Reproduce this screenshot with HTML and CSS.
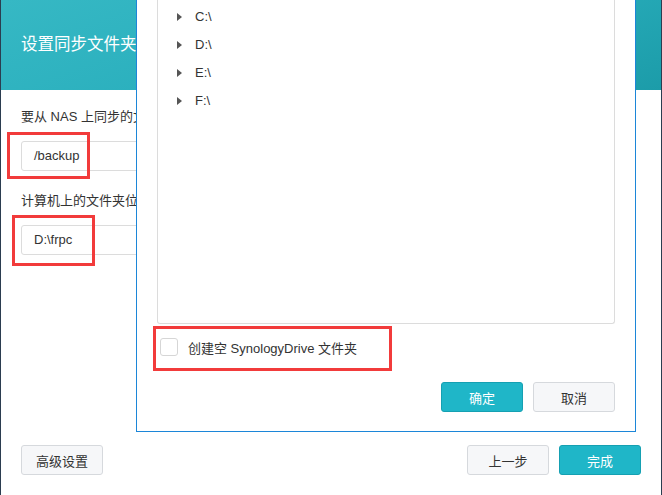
FILE: index.html
```html
<!DOCTYPE html>
<html lang="zh-CN">
<head>
    <meta charset="UTF-8">
    <title>设置同步文件夹</title>
    <link rel="stylesheet" href="styles.css">
</head>
<body>
    <div class="window">
        <div class="header">
            <h1>设置同步文件夹</h1>
        </div>
        <div class="content">
            <div class="label">要从 NAS 上同步的文件夹</div>
            <div class="input-wrap">
                <div class="input">/backup</div>
                <span class="mark mark-nas"></span>
            </div>
            <div class="label">计算机上的文件夹位置</div>
            <div class="input-wrap">
                <div class="input">D:\frpc</div>
                <span class="mark mark-pc"></span>
            </div>
        </div>
        <div class="footer">
            <button class="btn">高级设置</button>
            <div class="spacer"></div>
            <button class="btn">上一步</button>
            <button class="btn btn-primary">完成</button>
        </div>

        <!-- folder picker dialog -->
        <div class="dialog">
            <div class="tree">
                <ul class="tree-list">
                    <li><span class="arrow"></span>C:\</li>
                    <li><span class="arrow"></span>D:\</li>
                    <li><span class="arrow"></span>E:\</li>
                    <li><span class="arrow"></span>F:\</li>
                </ul>
            </div>
            <div class="check-row">
                <span class="checkbox"></span>
                <span class="check-label">创建空 SynologyDrive 文件夹</span>
                <span class="mark mark-check"></span>
            </div>
            <div class="dialog-buttons">
                <button class="btn btn-primary">确定</button>
                <button class="btn">取消</button>
            </div>
        </div>
    </div>
</body>
</html>
```

FILE: styles.css
```css
body {
    margin: 0;
    font-family: "Liberation Sans", "Noto Sans CJK SC", sans-serif;
    font-size: 13px;
    color: #333;
    background: #fff;
}
.window {
    position: relative;
    width: 662px;
    height: 495px;
    box-sizing: border-box;
    border-left: 1px solid #2b3d50;
    border-right: 1px solid #2b3d50;
    display: flex;
    flex-direction: column;
    overflow: hidden;
}
.header {
    height: 90px;
    background: linear-gradient(160deg, #36b8c4 0%, #2aafbd 50%, #1c9ca9 100%);
    display: flex;
    align-items: center;
    padding: 0 20px;
}
.header h1 {
    margin: 0;
    color: #fff;
    font-size: 16.5px;
    font-weight: normal;
    font-family: "Noto Sans CJK SC", sans-serif;
    position: relative;
    top: -2px;
}
.content {
    padding: 17px 20px 0;
}
.label {
    line-height: 20px;
    height: 20px;
    margin-bottom: 14px;
}
.input-wrap {
    position: relative;
    width: 420px;
    margin-bottom: 20px;
}
.input {
    height: 30px;
    box-sizing: border-box;
    border: 1px solid #dcdcdc;
    border-radius: 3px;
    padding: 0 12px;
    line-height: 28px;
}
.mark {
    position: absolute;
    border: 3px solid #f23b3b;
    box-sizing: border-box;
}
.mark-nas {
    left: -14px;
    top: -9px;
    width: 83px;
    height: 47px;
}
.mark-pc {
    left: -9px;
    top: -10px;
    width: 83px;
    height: 51px;
}
.footer {
    margin-top: auto;
    padding: 0 20px 20px;
    display: flex;
    gap: 10px;
}
.spacer {
    flex: 1;
}
.btn {
    width: 82px;
    height: 30px;
    box-sizing: border-box;
    border: 1px solid #d6d9dd;
    border-radius: 3px;
    background: #f6f7f9;
    color: #333;
    font-family: "Noto Sans CJK SC", sans-serif;
    font-size: 13px;
    padding: 0;
}
.btn-primary {
    background: #1fb6c8;
    border-color: #15a0b2;
    color: #fff;
}
.dialog {
    position: absolute;
    left: 135px;
    top: -40px;
    width: 500px;
    height: 472px;
    box-sizing: border-box;
    background: #fff;
    border: 1px solid #1c86d8;
    padding: 0 20px 19px;
    display: flex;
    flex-direction: column;
}
.tree {
    flex: 1;
    border: 1px solid #dcdcdc;
    border-top: none;
    border-radius: 0 0 3px 3px;
}
.tree-list {
    list-style: none;
    margin: 0;
    padding: 42px 0 0 19px;
}
.tree-list li {
    height: 28px;
    line-height: 28px;
    display: flex;
    align-items: center;
}
.arrow {
    width: 0;
    height: 0;
    border-top: 4px solid transparent;
    border-bottom: 4px solid transparent;
    border-left: 5px solid #555;
    margin-right: 13px;
}
.check-row {
    position: relative;
    margin-top: 14px;
    height: 18px;
    padding-left: 3px;
    display: flex;
    align-items: center;
    gap: 10px;
}
.checkbox {
    width: 18px;
    height: 18px;
    box-sizing: border-box;
    border: 1px solid #d6d6d6;
    border-radius: 3px;
    background: #fff;
}
.mark-check {
    left: -4px;
    top: -12px;
    width: 239px;
    height: 45px;
}
.dialog-buttons {
    margin-top: 26px;
    display: flex;
    justify-content: flex-end;
    gap: 10px;
}
```
